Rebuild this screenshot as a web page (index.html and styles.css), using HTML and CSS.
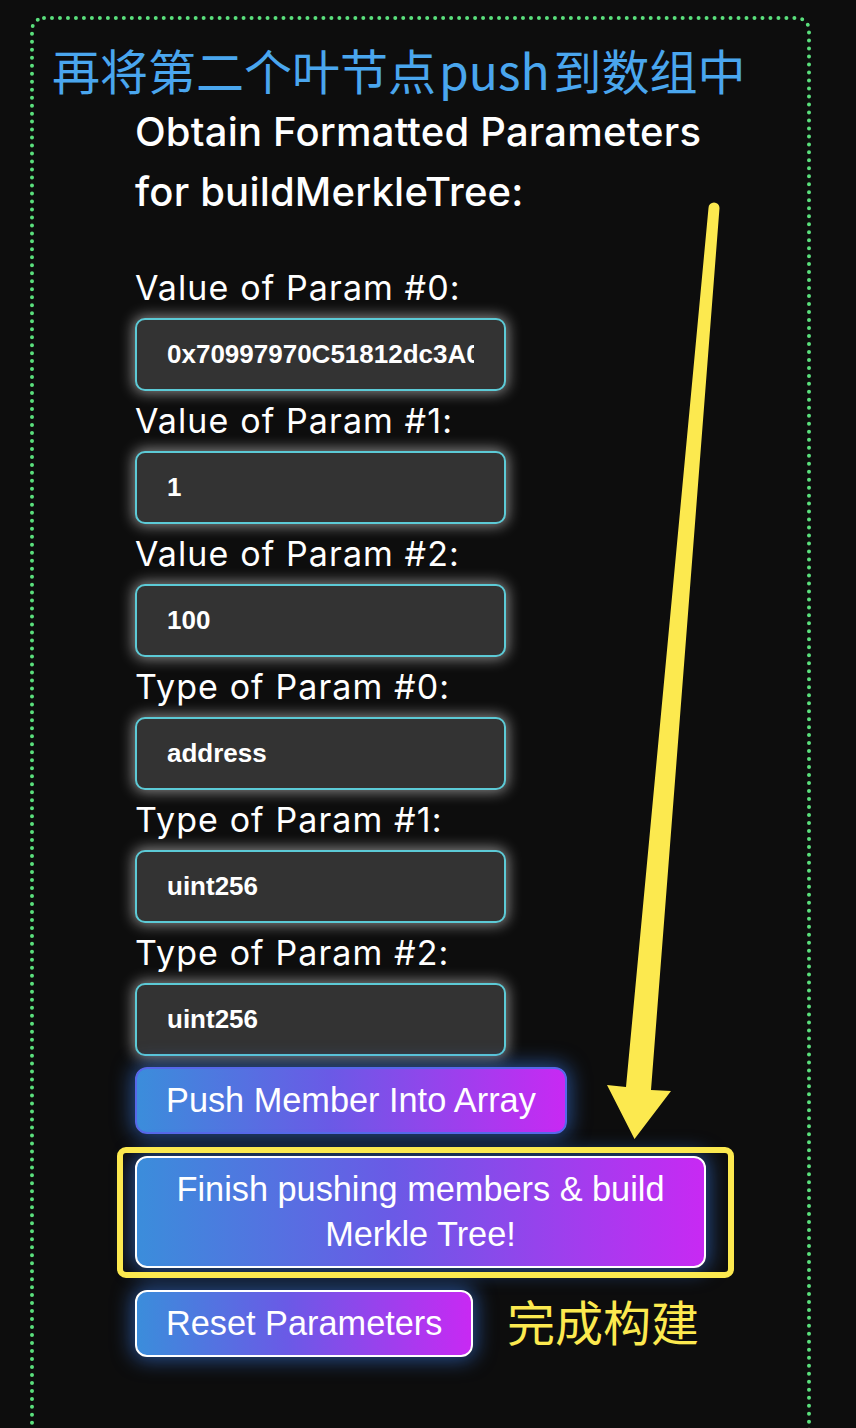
FILE: index.html
```html
<!DOCTYPE html>
<html lang="zh">
<head>
<meta charset="utf-8">
<title>Build Merkle Tree</title>
<link rel="stylesheet" href="styles.css">
</head>
<body>
<div class="page">
  <div class="frame">
    <div class="content">
      <h2 class="heading">Obtain Formatted Parameters for buildMerkleTree:</h2>
      <label class="field-label">Value of Param #0:</label>
      <input class="field" type="text" value="0x70997970C51812dc3A010C7d01b50e0d17dc79C8">
      <label class="field-label">Value of Param #1:</label>
      <input class="field" type="text" value="1">
      <label class="field-label">Value of Param #2:</label>
      <input class="field" type="text" value="100">
      <label class="field-label">Type of Param #0:</label>
      <input class="field" type="text" value="address">
      <label class="field-label">Type of Param #1:</label>
      <input class="field" type="text" value="uint256">
      <label class="field-label">Type of Param #2:</label>
      <input class="field" type="text" value="uint256">
      <button class="btn btn-push">Push Member Into Array</button>
      <button class="btn btn-finish">Finish pushing members &amp; build Merkle Tree!</button>
      <button class="btn btn-reset">Reset Parameters</button>
    </div>
  </div>

  <div class="note note-title">再将第二个叶节点<span class="latin">push</span>到数组中</div>
  <div class="note note-done">完成构建</div>
  <div class="highlight-box"></div>
  <svg class="arrow" width="856" height="1428" viewBox="0 0 856 1428" aria-hidden="true">
    <path d="M708.5,208 A5.5,5.5 0 0 1 719.5,208 L651,1090 L671,1091 L634.5,1139 L607,1085 L626,1087 Z" fill="#fce94f"/>
  </svg>
</div>
</body>
</html>
```

FILE: styles.css
```css
html, body {
  margin: 0;
  padding: 0;
  background: #0d0d0d;
}

.page {
  position: relative;
  width: 856px;
  height: 1428px;
  overflow: hidden;
  padding: 16px 0 0 30px;
  box-sizing: border-box;
}

.frame {
  width: 781px;
  min-height: 1500px;
  box-sizing: border-box;
  border: 4px dotted #5adf7c;
  border-radius: 14px;
  padding-top: 82px;
}

.content {
  width: 571px;
  margin: 0 auto;
  color: #ffffff;
}

.heading {
  margin: 0 0 36px;
  font-family: Inter, "Liberation Sans", sans-serif;
  font-size: 40px;
  font-weight: 500;
  letter-spacing: 0.2px;
  line-height: 60px;
  color: #ffffff;
}

.field-label {
  display: block;
  font-family: Inter, "Liberation Sans", sans-serif;
  font-size: 34px;
  font-weight: 400;
  letter-spacing: 1.1px;
  line-height: 60px;
  color: #ffffff;
}

.field {
  display: block;
  width: 371px;
  height: 73px;
  box-sizing: border-box;
  margin: 0;
  padding: 0 30px;
  border: 2px solid #5ccad6;
  border-radius: 10px;
  background: #333333;
  color: #ffffff;
  font-family: "Liberation Sans", Arial, sans-serif;
  font-size: 26px;
  font-weight: 700;
  box-shadow: 0 0 14px 2px rgba(255, 255, 255, 0.5);
  outline: none;
}

.btn {
  display: block;
  box-sizing: border-box;
  margin: 22px 0 0;
  padding: 9px 29px;
  border: 2px solid #ffffff;
  border-radius: 12px;
  background: linear-gradient(90deg, #3b8ddb 0%, #6a5ae6 45%, #c829f3 100%);
  color: #ffffff;
  font-family: "Liberation Sans", Arial, sans-serif;
  font-size: 34.3px;
  font-weight: 400;
  line-height: 45px;
  text-align: center;
  box-shadow: 0 0 20px 3px rgba(59, 130, 246, 0.55);
}

.btn-push {
  margin-top: 11px;
  border-color: #5668e8;
}

.btn-finish {
  width: 100%;
}

.note {
  position: absolute;
  font-family: "Noto Sans CJK SC", sans-serif;
  font-size: 48px;
  line-height: 48px;
  white-space: nowrap;
}

.note-title {
  left: 52px;
  top: 45px;
  color: #4aa6ee;
}

.latin {
  margin: 0 4px 0 3px;
}

.note-done {
  left: 507px;
  top: 1296px;
  color: #fce94f;
}

.highlight-box {
  position: absolute;
  left: 117px;
  top: 1147px;
  width: 617px;
  height: 131px;
  box-sizing: border-box;
  border: 6px solid #fce94f;
  border-radius: 9px;
}

.arrow {
  position: absolute;
  left: 0;
  top: 0;
  pointer-events: none;
}
```
